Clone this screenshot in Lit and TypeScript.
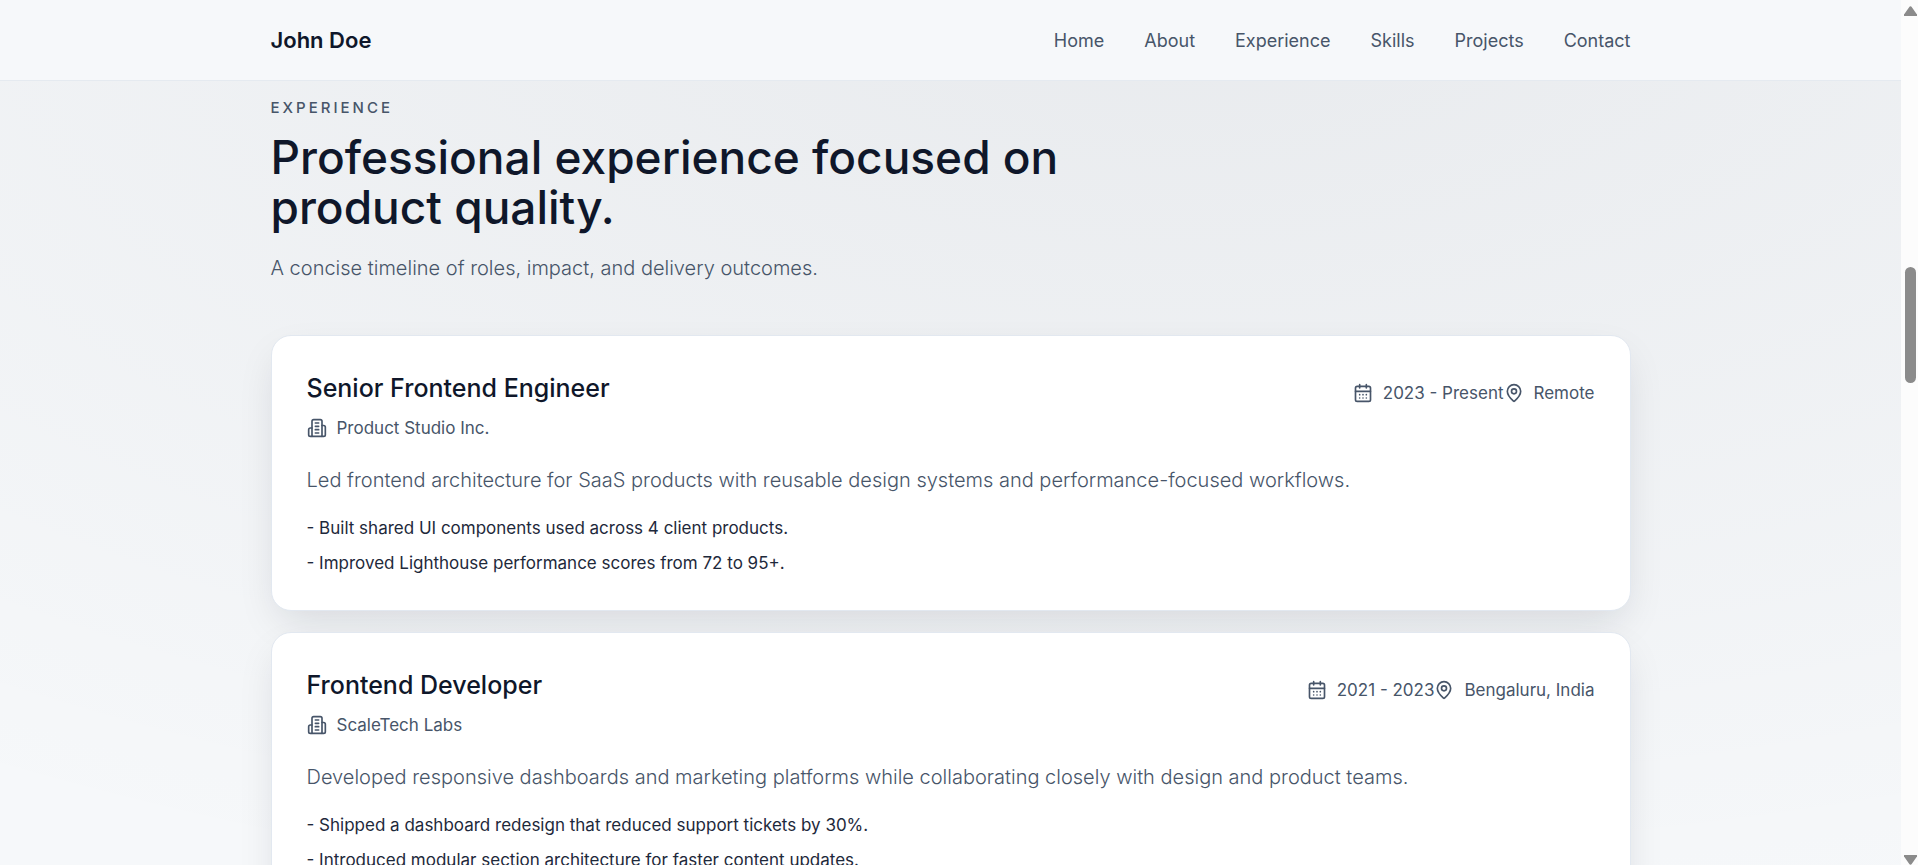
import { LitElement, html, css, svg } from "lit";
import { customElement, property } from "lit/decorators.js";

interface Role {
  title: string;
  company: string;
  period: string;
  place: string;
  summary: string;
  points: string[];
}

const NAV = ["Home", "About", "Experience", "Skills", "Projects", "Contact"];

const ROLES: Role[] = [
  {
    title: "Senior Frontend Engineer",
    company: "Product Studio Inc.",
    period: "2023 - Present",
    place: "Remote",
    summary:
      "Led frontend architecture for SaaS products with reusable design systems and performance-focused workflows.",
    points: [
      "Built shared UI components used across 4 client products.",
      "Improved Lighthouse performance scores from 72 to 95+.",
    ],
  },
  {
    title: "Frontend Developer",
    company: "ScaleTech Labs",
    period: "2021 - 2023",
    place: "Bengaluru, India",
    summary:
      "Developed responsive dashboards and marketing platforms while collaborating closely with design and product teams.",
    points: [
      "Shipped a dashboard redesign that reduced support tickets by 30%.",
      "Introduced modular section architecture for faster content updates.",
    ],
  },
];

const ICONS = {
  building: svg`<path d="M6 22V4a2 2 0 0 1 2-2h8a2 2 0 0 1 2 2v18Z"/><path d="M6 12H4a2 2 0 0 0-2 2v6a2 2 0 0 0 2 2h2"/><path d="M18 9h2a2 2 0 0 1 2 2v9a2 2 0 0 1-2 2h-2"/><path d="M10 6h4M10 10h4M10 14h4M10 18h4"/>`,
  calendar: svg`<path d="M8 2v4M16 2v4"/><rect width="18" height="18" x="3" y="4" rx="2"/><path d="M3 10h18M8 14h.01M12 14h.01M16 14h.01M8 18h.01M12 18h.01M16 18h.01"/>`,
  pin: svg`<path d="M20 10c0 4.993-5.539 10.193-7.399 11.799a1 1 0 0 1-1.202 0C9.539 20.193 4 14.993 4 10a8 8 0 0 1 16 0"/><circle cx="12" cy="10" r="3"/>`,
};

const icon = (name: keyof typeof ICONS) => html`
  <svg class="icon" viewBox="0 0 24 24" aria-hidden="true">${ICONS[name]}</svg>
`;

@customElement("role-card")
export class RoleCard extends LitElement {
  static styles = css`
    :host {
      display: block;
      background: #fff;
      border: 1px solid #e2e8f0;
      border-radius: 20px;
      padding: 34px 35px 31px;
      box-shadow: 0 16px 40px -8px rgba(15, 23, 42, 0.13);
    }
    .head {
      display: flex;
      justify-content: space-between;
      align-items: flex-start;
      gap: 20px;
    }
    .title {
      margin: 0 0 6px;
      font-size: 25px;
      line-height: 36px;
      font-weight: 500;
      color: #0f172a;
    }
    .meta {
      display: flex;
      align-items: center;
      font-size: 17px;
      line-height: 32px;
      color: #475569;
    }
    .side {
      margin-top: 7px;
    }
    .item {
      display: flex;
      align-items: center;
      gap: 10px;
    }
    .icon {
      width: 20px;
      height: 20px;
      fill: none;
      stroke: currentColor;
      stroke-width: 2;
      stroke-linecap: round;
      stroke-linejoin: round;
    }
    .summary {
      margin: 18px 0 15px;
      font-size: 20px;
      line-height: 36px;
      font-weight: 300;
      color: #475569;
    }
    .points {
      list-style: none;
      margin: 0;
      padding: 0;
      display: grid;
      gap: 4px;
      font-size: 17px;
      line-height: 31px;
      color: #1e293b;
    }
  `;

  @property({ attribute: false }) role!: any;

  render() {
    const r: Role = this.role;
    return html`
      <article>
        <div class="head">
          <div>
            <h3 class="title">${r.title}</h3>
            <div class="meta item">${icon("building")}<span>${r.company}</span></div>
          </div>
          <div class="meta side">
            <span class="item">${icon("calendar")}<span>${r.period}</span></span>
            <span class="item">${icon("pin")}<span>${r.place}</span></span>
          </div>
        </div>
        <p class="summary">${r.summary}</p>
        <ul class="points">
          ${r.points.map((p) => html`<li>- ${p}</li>`)}
        </ul>
      </article>
    `;
  }
}

@customElement("app-root")
export class AppRoot extends LitElement {
  static styles = css`
    :host {
      display: grid;
      grid-template-columns: minmax(0, 1fr) 17px;
      height: 100vh;
      overflow: hidden;
      font-family: Inter, "Noto Sans", sans-serif;
      color: #0f172a;
      background: #f5f7fa;
    }
    .page {
      overflow: hidden;
      background:
        radial-gradient(ellipse 115% 110% at 62% 0%, rgba(15, 23, 42, 0.06), transparent 100%),
        #f6f8fa;
    }
    .wrap {
      max-width: 1360px;
      margin: 0 auto;
    }
    .top {
      background: #f6f8fa;
      border-bottom: 1px solid #e5eaf0;
    }
    .bar {
      display: flex;
      align-items: center;
      justify-content: space-between;
      height: 80px;
    }
    .brand {
      font-size: 22px;
      font-weight: 600;
      color: #0f172a;
      text-decoration: none;
    }
    .nav {
      display: flex;
      gap: 40px;
    }
    .link {
      font-size: 18px;
      color: #475569;
      text-decoration: none;
    }
    .label {
      margin: 0;
      padding-top: 14px;
      font-size: 15px;
      line-height: 26px;
      font-weight: 500;
      letter-spacing: 3px;
      text-transform: uppercase;
      color: #475569;
    }
    .heading {
      margin: 11px 0 0;
      max-width: 820px;
      font-size: 46px;
      line-height: 50px;
      font-weight: 500;
    }
    .lead {
      margin: 18px 0 49px;
      font-size: 20px;
      line-height: 36px;
      font-weight: 300;
      color: #475569;
    }
    .roles {
      display: grid;
      gap: 21px;
    }
    .scroll {
      display: flex;
      flex-direction: column;
      align-items: center;
      padding-left: 2px;
      background: #fcfcfc;
    }
    .arrow {
      width: 13px;
      height: 10px;
      fill: #8b8b8b;
    }
    .track {
      flex: 1;
      display: grid;
      grid-template-rows: 251fr 116fr 471fr;
    }
    .thumb {
      grid-row: 2;
      width: 11px;
      border-radius: 6px;
      background: #8b8b8b;
    }
    .up {
      margin-top: 6px;
    }
  `;

  render() {
    return html`
      <div class="page">
        <header class="top">
          <div class="wrap bar">
            <a class="brand" href="#home">John Doe</a>
            <nav class="nav">
              ${NAV.map((n) => html`<a class="link" href="#${n.toLowerCase()}">${n}</a>`)}
            </nav>
          </div>
        </header>
        <main class="wrap">
          <p class="label">Experience</p>
          <h2 class="heading">Professional experience focused on product quality.</h2>
          <p class="lead">A concise timeline of roles, impact, and delivery outcomes.</p>
          <div class="roles">
            ${ROLES.map((r) => html`<role-card .role=${r}></role-card>`)}
          </div>
        </main>
      </div>
      <div class="scroll" aria-hidden="true">
        <svg class="arrow up" viewBox="0 0 13 10"><path d="M5.3 1a1.4 1.4 0 0 1 2.4 0L12.6 8a1 1 0 0 1-.9 2H1.3a1 1 0 0 1-.9-2Z"/></svg>
        <div class="track"><div class="thumb"></div></div>
        <svg class="arrow" viewBox="0 0 13 10"><path d="M5.3 9a1.4 1.4 0 0 0 2.4 0L12.6 2a1 1 0 0 0-.9-2H1.3a1 1 0 0 0-.9 2Z"/></svg>
      </div>
    `;
  }
}
